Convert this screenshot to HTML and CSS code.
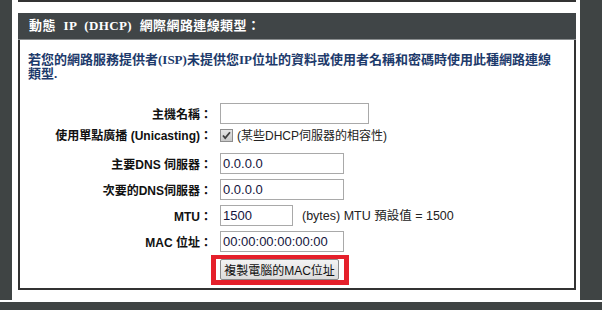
FILE: index.html
```html
<!DOCTYPE html>
<html lang="zh-Hant">
<head>
<meta charset="utf-8">
<title>動態 IP (DHCP)</title>
<link rel="stylesheet" href="styles.css">
</head>
<body>
<div class="page">
  <div class="side side-left"></div>
  <main class="content">
    <div class="prev-box"></div>
    <section class="panel">
      <h2 class="panel-title">動態 IP (DHCP) 網際網路連線類型：</h2>
      <p class="desc">若您的網路服務提供者(ISP)未提供您IP位址的資料或使用者名稱和密碼時使用此種網路連線<br>類型.</p>
      <div class="form">
        <div class="row">
          <label class="lbl">主機名稱：</label>
          <input class="inp inp-host" type="text" value="">
        </div>
        <div class="row row-check">
          <label class="lbl">使用單點廣播 (Unicasting)：</label>
          <span class="check">
            <svg width="13" height="13" viewBox="0 0 13 13">
              <defs>
                <linearGradient id="cg" x1="0" y1="0" x2="0" y2="1">
                  <stop offset="0" stop-color="#e6e6e6"/>
                  <stop offset="1" stop-color="#c8c8c8"/>
                </linearGradient>
              </defs>
              <rect x="0.5" y="0.5" width="12" height="12" fill="url(#cg)" stroke="#8d8d8d"/>
              <path d="M3 6.5 L5.2 9 L10 3.2" fill="none" stroke="#3f3f3f" stroke-width="1.8"/>
            </svg>
          </span>
          <span class="note note-check">(某些DHCP伺服器的相容性)</span>
        </div>
        <div class="row">
          <label class="lbl">主要DNS 伺服器：</label>
          <input class="inp inp-mid" type="text" value="0.0.0.0">
        </div>
        <div class="row">
          <label class="lbl">次要的DNS伺服器：</label>
          <input class="inp inp-mid" type="text" value="0.0.0.0">
        </div>
        <div class="row">
          <label class="lbl">MTU：</label>
          <input class="inp inp-mtu" type="text" value="1500">
          <span class="note note-mtu">(bytes) MTU 預設值 = 1500</span>
        </div>
        <div class="row">
          <label class="lbl">MAC 位址：</label>
          <input class="inp inp-mid" type="text" value="00:00:00:00:00:00">
        </div>
        <div class="row row-btn">
          <span class="lbl"></span>
          <span class="btn-wrap"><button class="btn" type="button">複製電腦的MAC位址</button></span>
        </div>
      </div>
    </section>
  </main>
  <div class="side side-right"></div>
</div>
<div class="footer-bar"></div>
</body>
</html>
```
FILE: styles.css
```css
html, body {
  margin: 0;
  padding: 0;
  background: #ffffff;
}

body {
  width: 602px;
  height: 310px;
  overflow: hidden;
  font-family: "Liberation Sans", "Noto Sans CJK TC", sans-serif;
}

.page {
  display: flex;
  height: 300px;
}

.side {
  background: #3f4444;
  height: 300px;
}

.side-left {
  width: 12px;
  margin-right: 6px;
}

.side-right {
  width: 22px;
  margin-left: 4px;
}

.content {
  width: 558px;
}

.prev-box {
  height: 0;
  border: 2px solid #333333;
  border-top: none;
}

.panel {
  margin-top: 11px;
  border: 2px solid #333333;
  border-top: none;
  padding-bottom: 8px;
}

.panel-title {
  margin: 0 -2px 0 -2px;
  height: 26px;
  line-height: 26px;
  background: #404547;
  border-bottom: 1px solid #8a8d8f;
  color: #ffffff;
  font-family: "Liberation Serif", "Noto Sans CJK TC", serif;
  font-weight: bold;
  font-size: 13px;
  padding-left: 11px;
  letter-spacing: 0.4px;
  word-spacing: 4px;
}

.desc {
  margin: 13px 0 0 0;
  padding: 0 8px;
  font-family: "Liberation Serif", "Noto Sans CJK TC", serif;
  font-weight: bold;
  font-size: 13px;
  line-height: 14px;
  color: #1d3a6b;
  white-space: nowrap;
}

.form {
  margin-top: 22px;
  display: flex;
  flex-direction: column;
  gap: 5px;
}

.row {
  display: flex;
  align-items: center;
  height: 21px;
}

.row-check {
  height: 19px;
  align-items: flex-start;
}

.row-check .lbl {
  line-height: 14px;
}

.row-btn {
  height: 21px;
  margin-top: 2px;
}

.lbl {
  width: 184px;
  margin-left: 8px;
  margin-right: 8px;
  text-align: right;
  font-weight: bold;
  font-size: 12px;
  color: #111111;
  white-space: nowrap;
}

.inp {
  box-sizing: border-box;
  height: 21px;
  border: 1px solid #a9a9a9;
  padding: 0 2px;
  margin: 0;
  font-family: "Liberation Sans", "Noto Sans CJK TC", sans-serif;
  font-size: 13px;
  color: #14143c;
  background: #ffffff;
}

.inp-host { width: 149px; }
.inp-mid { width: 124px; }
.inp-mtu { width: 73px; }

.check {
  display: block;
  width: 13px;
  height: 13px;
  margin-right: 4px;
}

.check svg {
  display: block;
}

.note {
  font-size: 12.5px;
  line-height: 14px;
  color: #222222;
  white-space: nowrap;
}

.note-check {
  font-size: 12px;
}

.note-mtu {
  margin-left: 9px;
}

.btn-wrap {
  position: relative;
  display: inline-block;
}

.btn-wrap::after {
  content: "";
  position: absolute;
  top: -4px;
  right: -10px;
  bottom: -5px;
  left: -9px;
  border-style: solid;
  border-color: #e5202b;
  border-width: 4px 5px 5px 5px;
  pointer-events: none;
}

.btn {
  box-sizing: border-box;
  display: block;
  width: 119px;
  height: 21px;
  margin: 0;
  padding: 0;
  white-space: nowrap;
  font-family: "Liberation Sans", "Noto Sans CJK TC", sans-serif;
  font-size: 12px;
  color: #111111;
  background: linear-gradient(#f3f3f3, #dcdcdc);
  border: 1px solid #8b8b8b;
  border-radius: 2px;
}

.footer-bar {
  margin-top: 2px;
  height: 8px;
  background: #3f4444;
}
```
